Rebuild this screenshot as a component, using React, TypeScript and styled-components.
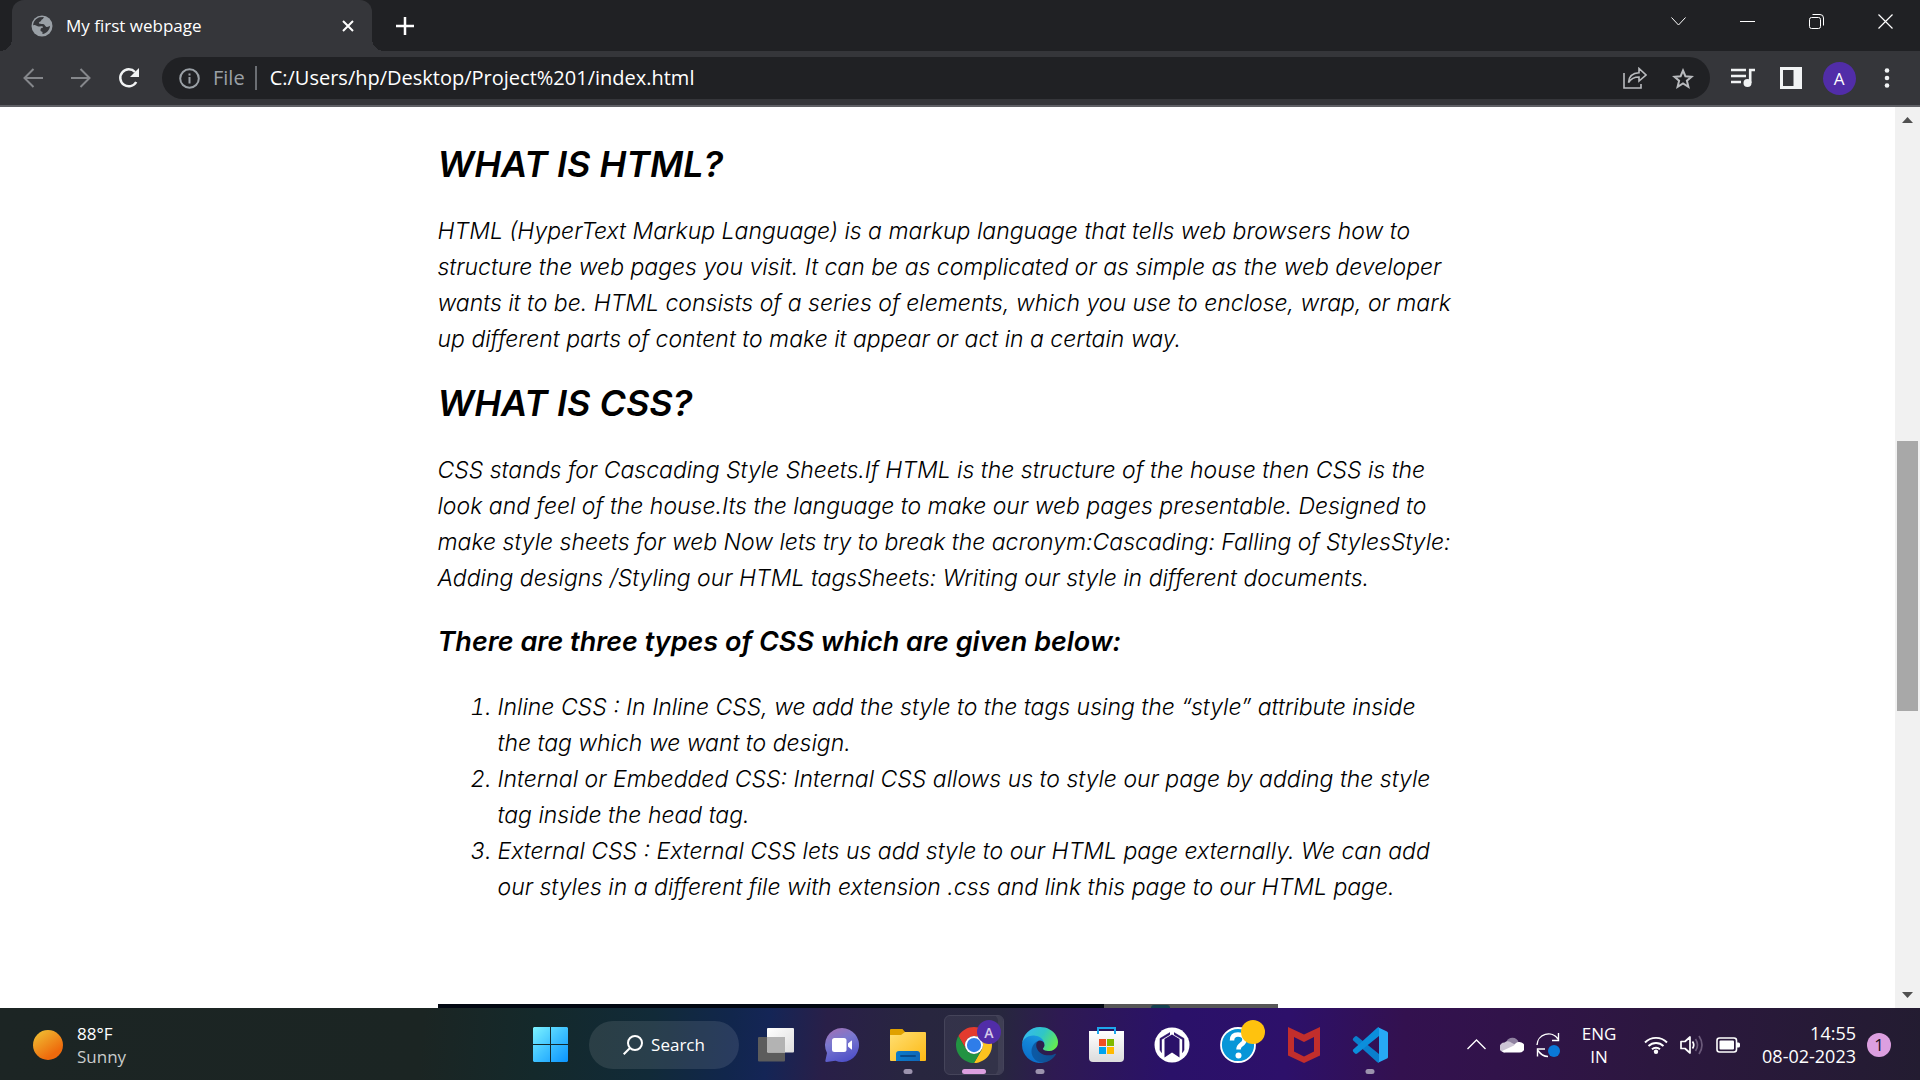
import React from 'react';
import styled, { createGlobalStyle } from 'styled-components';

const GlobalStyle = createGlobalStyle`
  *, *::before, *::after { box-sizing: border-box; }
  body { margin: 0; background: #fff; }
  button { border: 0; padding: 0; margin: 0; background: none; color: inherit; font: inherit; cursor: pointer; }
  svg { display: block; flex: none; }
`;

const UI_FONT = `"Open Sans", "Noto Sans", sans-serif`;

const Desktop = styled.div`
  display: flex;
  flex-direction: column;
  height: 100vh;
  overflow: hidden;
  font-family: ${UI_FONT};
`;

/* ---------- browser frame ---------- */

const TabStrip = styled.header`
  display: flex;
  flex: none;
  height: 51px;
  padding-left: 12px;
  background: #202124;
  color: #fff;
`;

const Tab = styled.div`
  position: relative;
  display: flex;
  align-items: center;
  width: 360px;
  padding: 0 12px 0 19px;
  border-radius: 12px 12px 0 0;
  background: #35363a;

  &::before, &::after {
    content: "";
    position: absolute;
    bottom: 0;
    width: 12px;
    height: 12px;
  }
  &::before { left: -12px; background: radial-gradient(circle at 0 0, transparent 12px, #35363a 12px); }
  &::after { right: -12px; background: radial-gradient(circle at 100% 0, transparent 12px, #35363a 12px); }
`;

const TabTitle = styled.span`
  flex: 1;
  margin-left: 13px;
  font-size: 17px;
  line-height: 24px;
`;

const StripButton = styled.button`
  display: grid;
  place-items: center;
  width: 24px;
  height: 24px;
`;

const NewTab = styled(StripButton)`
  width: 42px;
  height: 51px;
  margin-left: 12px;
`;

const WindowControls = styled.div`
  display: flex;
  margin-left: auto;
`;

const WindowButton = styled.button`
  display: grid;
  place-items: center;
  width: 69px;
  height: 42px;
`;

const Toolbar = styled.nav`
  display: flex;
  flex: none;
  align-items: center;
  height: 56px;
  padding: 0 9px;
  border-bottom: 2px solid #5f6065;
  background: #35363a;
`;

const ToolButton = styled.button<{ $tone?: string }>`
  display: grid;
  flex: none;
  place-items: center;
  width: 48px;
  height: 42px;
  color: ${(p) => p.$tone ?? '#f1f3f4'};
`;

const Omnibox = styled.div`
  display: flex;
  flex: 1;
  align-items: center;
  height: 42px;
  margin: 0 9px;
  padding: 0 3px;
  border-radius: 21px;
  background: #202124;
`;

const Scheme = styled.label`
  padding-right: 10px;
  border-right: 2px solid #6b6e73;
  color: #9aa0a6;
  font-size: 20px;
  line-height: 24px;
`;

const Address = styled.input`
  flex: 1;
  min-width: 0;
  padding: 0 0 0 13px;
  border: 0;
  outline: 0;
  background: transparent;
  color: #fff;
  font-family: ${UI_FONT};
  font-size: 20px;
  line-height: 30px;
`;

const Avatar = styled.span`
  display: grid;
  place-items: center;
  width: 33px;
  height: 33px;
  border-radius: 50%;
  background: #512da8;
  color: #fff;
  font-size: 17px;
`;

/* ---------- page ---------- */

const Viewport = styled.div`
  display: flex;
  flex: 1;
  min-height: 0;
`;

const Page = styled.main`
  flex: 1;
  min-width: 0;
  overflow: hidden;
  padding-top: 33px;
  background: #fff;
  color: #000;
`;

const Article = styled.article`
  max-width: 1020px;
  margin: 0 auto;
  font-family: Inter, "Open Sans", sans-serif;
  font-size: 23px;
  font-style: italic;
  font-weight: 300;
  line-height: 36px;
  white-space: nowrap;
`;

const Heading = styled.h2`
  margin: 22px 0 25px;
  font-size: 36px;
  font-weight: 600;
  line-height: 48px;

  &:first-child { margin-top: 0; }
`;

const SubHeading = styled.h3`
  margin: 28px 0 29px;
  font-size: 27px;
  font-weight: 600;
  line-height: 36px;
`;

const Paragraph = styled.p`
  margin: 0;
`;

const TypeList = styled.ol`
  margin: 0 0 99px;
  padding-left: 60px;
`;

const Screenshot = styled.div`
  display: flex;
  max-width: 840px;
  height: 120px;
  background: #020812;
`;

const ScreenshotSide = styled.div`
  display: flex;
  width: 174px;
  margin-left: auto;
  padding-left: 47px;
  background: #575757;
`;

const ScreenshotMark = styled.div`
  width: 19px;
  height: 24px;
  margin-top: 1px;
  border-radius: 3px 3px 0 0;
  background: #14404e;
`;

const Scrollbar = styled.div`
  display: flex;
  flex: none;
  flex-direction: column;
  width: 25px;
  background: #f1f1f1;
`;

const ScrollArrow = styled.button`
  display: grid;
  place-items: center;
  height: 26px;
`;

const Track = styled.div`
  display: flex;
  flex: 1;
  flex-direction: column;
  padding: 0 2px;

  &::before { content: ""; flex: 308; }
  &::after { content: ""; flex: 271; }
`;

const Thumb = styled.div`
  flex: 270;
  background: #a8a8a8;
`;

/* ---------- taskbar ---------- */

const Taskbar = styled.footer`
  display: grid;
  flex: none;
  grid-template-columns: 1fr auto 1fr;
  height: 72px;
  padding-top: 1px;
  color: #fff;
  font-size: 17px;
  line-height: 23px;
  background: linear-gradient(95deg,
    #1c2524 0%, #1b2523 22%, #14292b 28%, #112a38 34%, #11264c 38%,
    #142556 40%, #291f48 43%, #28263f 48%, #27273e 52%, #2e1a52 55%,
    #2a1169 61%, #2d106a 67%, #33114f 73%, #31134a 78%, #2c173f 86%, #231c31 100%);
`;

const Weather = styled.button`
  display: flex;
  align-items: center;
  justify-self: start;
  gap: 14px;
  padding-left: 33px;
  text-align: left;
`;

const Sun = styled.span`
  width: 30px;
  height: 30px;
  border-radius: 50%;
  background: linear-gradient(145deg, #f0b42e 15%, #ee6a0c 75%);
`;

const Stack = styled.span`
  display: flex;
  flex-direction: column;
`;

const Muted = styled.span`
  color: #c9cccb;
`;

const Apps = styled.div`
  display: flex;
  align-items: center;
`;

const AppButton = styled.button<{ $mark?: 'dot' | 'bar' }>`
  position: relative;
  display: grid;
  place-items: center;
  width: 66px;
  height: 71px;

  &::after {
    content: "";
    display: ${(p) => (p.$mark ? 'block' : 'none')};
    position: absolute;
    bottom: 6px;
    left: 50%;
    width: ${(p) => (p.$mark === 'bar' ? '24px' : '9px')};
    height: 5px;
    border-radius: 3px;
    background: ${(p) => (p.$mark === 'bar' ? '#dc9fe0' : '#9c93ae')};
    transform: translateX(-50%);
  }
`;

const ActiveTile = styled.span`
  display: grid;
  place-items: center;
  width: 60px;
  height: 60px;
  border: 1px solid #45445a;
  border-radius: 6px;
  background: rgba(255, 255, 255, 0.06);
  box-shadow: inset -6px 0 0 -1px rgba(255, 255, 255, 0.06);
`;

const Search = styled.button`
  display: flex;
  align-items: center;
  justify-content: center;
  gap: 8px;
  width: 150px;
  height: 48px;
  margin: 0 4px 0 6px;
  border-radius: 24px;
  background: rgba(255, 255, 255, 0.1);
`;

const AppBadge = styled.span<{ $color: string }>`
  position: absolute;
  top: 11px;
  right: 6px;
  display: grid;
  place-items: center;
  width: 24px;
  height: 24px;
  border-radius: 50%;
  background: ${(p) => p.$color};
  color: #d5cbea;
  font-size: 14px;
  font-weight: 600;
`;

const Tray = styled.div`
  display: flex;
  align-items: center;
  justify-self: end;
  padding-right: 29px;
`;

const TrayButton = styled.button`
  display: grid;
  place-items: center;
  width: 36px;
  height: 48px;
`;

const Language = styled.button`
  width: 66px;
  margin-right: 6px;
`;

const Clock = styled.button`
  margin: 0 11px 0 16px;
  font-size: 18px;
  text-align: right;
`;

const Notice = styled.button`
  width: 24px;
  height: 24px;
  border-radius: 50%;
  background: #dc9fe0;
  color: #1c1220;
  font-size: 17px;
`;

/* ---------- icons ---------- */

const line = { fill: 'none', stroke: 'currentColor' } as const;

const GlobeIcon = () => (
  <svg width="22" height="22" viewBox="0 0 22 22">
    <circle cx="11" cy="11" r="10.5" fill="#9aa0a6" />
    <path d="M8.5 2.2 13 2c-1 1-.5 2-2 2.4-.9.3-.5 1.500-1.600 2-1 .4-1.700.8-1.500 1.700.4 1.200 2.400.7 4.200.9 1.900.2 1.700 2 3 2.700 1.200.5 2.900-.1 4-.9-.4 4.300-3.500 7.600-7.500 8.300-.6-.6.400-1.600-.4-2.300-.9-.8-1.900-.5-1.700-1.900.2-1.600.3-1.600 2.100-2.100.8-.3.400-1.200-.6-1.500-2.200-.6-2.100.8-4.200-.1C5 10.600 4.200 9.200 2.100 10.400 2.300 6.200 5 3.400 8.500 2.200Z" fill="#35363a" />
  </svg>
);

const FolderIcon = () => (
  <svg width="36" height="34" viewBox="0 0 36 34">
    <defs>
      <linearGradient id="folder" x1="0" y1="0" x2="1" y2="1"><stop offset="0" stopColor="#ffdf73" /><stop offset="1" stopColor="#fdb913" /></linearGradient>
      <linearGradient id="folderTab" x1="0" y1="0" x2="1" y2="0"><stop offset="0" stopColor="#0a7bcb" /><stop offset="1" stopColor="#1167b8" /></linearGradient>
    </defs>
    <path d="M0 2Q0 1 1 1h11.500L15 4v10H0Z" fill="#e0a100" />
    <path d="M0 7h11l4-3h20q1 0 1 1v27q0 1-1 1H1q-1 0-1-1Z" fill="url(#folder)" />
    <path d="M6 33v-7q0-3 3-3h18q3 0 3 3v7Z" fill="url(#folderTab)" />
    <path d="M11 28h14" stroke="#084a8a" strokeWidth="2" strokeLinecap="round" />
  </svg>
);

const ChromeIcon = () => (
  <svg width="36" height="36" viewBox="0 0 48 48">
    <path d="M24 12H44.780A24 24 0 0 0 3.220 12L13.610 30A12 12 0 0 1 24 12Z" fill="#e33b2e" />
    <path d="M34.390 30 24 48A24 24 0 0 0 44.780 12H24A12 12 0 0 1 34.390 30Z" fill="#fcc31e" />
    <path d="M13.610 30 3.220 12A24 24 0 0 0 24 48L34.390 30A12 12 0 0 1 13.610 30Z" fill="#229342" />
    <circle cx="24" cy="24" r="12" fill="#fff" />
    <circle cx="24" cy="24" r="9.500" fill="#2f7de9" />
  </svg>
);

const EdgeIcon = () => (
  <svg width="36" height="36" viewBox="0 0 256 256">
    <defs>
      <linearGradient id="e1" x1="0.200" y1="0.600" x2="1" y2="0.600"><stop offset="0" stopColor="#0c59a4" /><stop offset="1" stopColor="#114a8b" /></linearGradient>
      <linearGradient id="e2" x1="0.700" y1="0" x2="0.300" y2="1"><stop offset="0" stopColor="#1b9de2" /><stop offset="0.400" stopColor="#1384d7" /><stop offset="1" stopColor="#0a6cc9" /></linearGradient>
      <linearGradient id="e3" x1="0" y1="0.300" x2="1" y2="0.700"><stop offset="0" stopColor="#35b9f0" /><stop offset="0.500" stopColor="#30c6c6" /><stop offset="1" stopColor="#66eb4c" /></linearGradient>
    </defs>
    <path fill="url(#e1)" d="M235.680 190.460a93.730 93.730 0 0 1-10.540 4.710 101.870 101.870 0 0 1-35.900 6.460c-47.320 0-88.540-32.550-88.540-74.320A31.480 31.480 0 0 1 117.130 99.900c-42.800 1.800-53.800 46.400-53.800 72.530 0 73.880 68.090 81.370 82.760 81.370 7.910 0 19.840-2.300 27-4.560l1.310-.44a128.340 128.340 0 0 0 66.600-52.800 4 4 0 0 0-5.320-5.540z" />
    <path fill="url(#e2)" d="M105.730 241.420a79.200 79.200 0 0 1-22.740-21.340 80.720 80.720 0 0 1 29.530-120.200c3.120-1.470 8.450-4.130 15.540-4a32.350 32.350 0 0 1 25.690 13 31.880 31.880 0 0 1 6.360 18.660c0-.21 24.460-79.600-80-79.600-43.900 0-80 41.660-80 78.210a130.150 130.150 0 0 0 12.110 56 128 128 0 0 0 156.380 67.110 75.550 75.550 0 0 1-62.780-8z" />
    <path fill="url(#e3)" d="M152.330 148.860c-.81 1.050-3.300 2.500-3.300 5.660 0 2.610 1.700 5.120 4.720 7.230 14.380 10 41.490 8.680 41.560 8.680a59.560 59.560 0 0 0 30.270-8.350A61.380 61.380 0 0 0 256 109.200c.26-22.410-8-37.310-11.340-43.910C223.460 23.840 177.720 0 128 0A128 128 0 0 0 0 126.200c.48-36.540 36.800-66.050 80-66.050 3.500 0 23.460.34 42 10.070 16.340 8.580 24.900 18.940 30.850 29.210 6.180 10.670 7.280 24.150 7.280 29.520 0 5.370-2.740 13.330-7.800 19.910z" />
  </svg>
);

const CodeIcon = () => (
  <svg width="36" height="36" viewBox="0 0 36 36">
    <path d="M1 11.500 3 9.500q1-.8 2.200 0L27 27v8.600Q26 36 25 35L1.200 13.400q-.9-1 0-1.900Z" fill="#0a7fcd" />
    <path d="M1 24.500 3 26.500q1 .8 2.200 0L27 9V.4Q26 0 25 1L1.200 22.600q-.9 1 0 1.900Z" fill="#0b8fdc" />
    <path d="M26 .2 35 4.500q1 .5 1 1.500v24q0 1-1 1.500l-9 4.300q1-.6 1-2V2.200q0-1.400-1-2Z" fill="#27a9f5" />
  </svg>
);

/* ---------- composition ---------- */

const LISTED = [
  ['Inline CSS : In Inline CSS, we add the style to the tags using the “style” attribute inside', 'the tag which we want to design.'],
  ['Internal or Embedded CSS: Internal CSS allows us to style our page by adding the style', 'tag inside the head tag.'],
  ['External CSS : External CSS lets us add style to our HTML page externally. We can add', 'our styles in a different file with extension .css and link this page to our HTML page.'],
];

const Browser = () => (
  <>
    <TabStrip>
      <Tab>
        <GlobeIcon />
        <TabTitle>My first webpage</TabTitle>
        <StripButton aria-label="Close tab">
          <svg width="12" height="12" viewBox="0 0 12 12" {...line} strokeWidth="2"><path d="m1 1 10 10M11 1 1 11" /></svg>
        </StripButton>
      </Tab>
      <NewTab aria-label="New tab">
        <svg width="18" height="18" viewBox="0 0 18 18" {...line} strokeWidth="2.500"><path d="M9 0v18M0 9h18" /></svg>
      </NewTab>
      <WindowControls>
        <WindowButton aria-label="Search tabs">
          <svg width="15" height="9" viewBox="0 0 15 9" {...line}><path d="m.5.500 7 7.500 7-7.500" /></svg>
        </WindowButton>
        <WindowButton aria-label="Minimize">
          <svg width="15" height="15" viewBox="0 0 15 15" {...line}><path d="M0 7.500h15" /></svg>
        </WindowButton>
        <WindowButton aria-label="Restore">
          <svg width="15" height="15" viewBox="0 0 15 15" {...line}><rect x=".5" y="3.500" width="11" height="11" rx="2" /><path d="M3.500.5h7.500a3.500 3.500 0 0 1 3.500 3.500v7.500" /></svg>
        </WindowButton>
        <WindowButton aria-label="Close">
          <svg width="15" height="15" viewBox="0 0 15 15" {...line} strokeWidth="1.200"><path d="m.5.500 14 14m0-14-14 14" /></svg>
        </WindowButton>
      </WindowControls>
    </TabStrip>
    <Toolbar aria-label="Browser toolbar">
      <ToolButton $tone="#85878b" aria-label="Back">
        <svg width="20" height="20" viewBox="0 0 20 20" {...line} strokeWidth="2"><path d="M20 10H2M10.500 1 1.500 10l9 9" /></svg>
      </ToolButton>
      <ToolButton $tone="#85878b" aria-label="Forward">
        <svg width="20" height="20" viewBox="0 0 20 20" {...line} strokeWidth="2"><path d="M0 10h18M9.500 1l9 9-9 9" /></svg>
      </ToolButton>
      <ToolButton aria-label="Reload">
        <svg width="22" height="22" viewBox="0 0 22 22"><path d="M18.200 15A8.500 8.500 0 1 1 17 5" fill="none" stroke="currentColor" strokeWidth="2.500" /><path d="M21 1v9h-9Z" fill="currentColor" /></svg>
      </ToolButton>
      <Omnibox>
        <ToolButton $tone="#9aa0a6" aria-label="View site information">
          <svg width="21" height="21" viewBox="0 0 21 21" {...line} strokeWidth="2"><circle cx="10.500" cy="10.500" r="9.300" /><path d="M10.500 9v6.500M10.500 5.500v2" /></svg>
        </ToolButton>
        <Scheme htmlFor="address">File</Scheme>
        <Address id="address" defaultValue="C:/Users/hp/Desktop/Project%201/index.html" />
        <ToolButton $tone="#b9bbbe" aria-label="Share this page">
          <svg width="24" height="22" viewBox="0 0 24 22" {...line} strokeWidth="1.600"><path d="M1 6v15h17v-4" /><path d="M5.500 15.500C6 9 10 6 16 5.800V1.500L23 8l-7 6v-4c-5 0-8 1.500-10.500 5.500Z" /></svg>
        </ToolButton>
        <ToolButton $tone="#b9bbbe" aria-label="Bookmark this tab">
          <svg width="22" height="21" viewBox="0 0 22 21" {...line} strokeWidth="2"><path d="m11 2.500 2.400 5.700 6.200.5-4.700 4 1.500 6.100-5.400-3.300-5.400 3.300 1.500-6.100-4.700-4 6.200-.5Z" /></svg>
        </ToolButton>
      </Omnibox>
      <ToolButton aria-label="Media controls">
        <svg width="24" height="20" viewBox="0 0 24 20"><path d="M0 2h15M0 8h15M0 14h10" fill="none" stroke="currentColor" strokeWidth="2.500" /><circle cx="16.500" cy="15" r="4" fill="currentColor" /><path d="M19.200 15V2H24" fill="none" stroke="currentColor" strokeWidth="2.600" /></svg>
      </ToolButton>
      <ToolButton aria-label="Side panel">
        <svg width="22" height="22" viewBox="0 0 22 22"><rect width="22" height="22" fill="currentColor" /><rect x="3" y="3" width="10.500" height="16" fill="#35363a" /></svg>
      </ToolButton>
      <ToolButton aria-label="Profile"><Avatar>A</Avatar></ToolButton>
      <ToolButton aria-label="Menu">
        <svg width="6" height="22" viewBox="0 0 6 22" fill="currentColor"><circle cx="3" cy="3.500" r="2.300" /><circle cx="3" cy="11" r="2.300" /><circle cx="3" cy="18.500" r="2.300" /></svg>
      </ToolButton>
    </Toolbar>
  </>
);

const Content = () => (
  <Viewport>
    <Page>
      <Article>
        <Heading>WHAT IS HTML?</Heading>
        <Paragraph>
          HTML (HyperText Markup Language) is a markup language that tells web browsers how to<br />
          structure the web pages you visit. It can be as complicated or as simple as the web developer<br />
          wants it to be. HTML consists of a series of elements, which you use to enclose, wrap, or mark<br />
          up different parts of content to make it appear or act in a certain way.
        </Paragraph>
        <Heading>WHAT IS CSS?</Heading>
        <Paragraph>
          CSS stands for Cascading Style Sheets.If HTML is the structure of the house then CSS is the<br />
          look and feel of the house.Its the language to make our web pages presentable. Designed to<br />
          make style sheets for web Now lets try to break the acronym:Cascading: Falling of StylesStyle:<br />
          Adding designs /Styling our HTML tagsSheets: Writing our style in different documents.
        </Paragraph>
        <SubHeading>There are three types of CSS which are given below:</SubHeading>
        <TypeList>
          {LISTED.map(([first, second]) => (
            <li key={first}>{first}<br />{second}</li>
          ))}
        </TypeList>
        <Screenshot>
          <ScreenshotSide><ScreenshotMark /></ScreenshotSide>
        </Screenshot>
      </Article>
    </Page>
    <Scrollbar>
      <ScrollArrow aria-label="Scroll up">
        <svg width="11" height="6" viewBox="0 0 11 6"><path d="M0 6 5.500 0 11 6Z" fill="#505050" /></svg>
      </ScrollArrow>
      <Track><Thumb /></Track>
      <ScrollArrow aria-label="Scroll down">
        <svg width="11" height="6" viewBox="0 0 11 6"><path d="M0 0h11L5.500 6Z" fill="#505050" /></svg>
      </ScrollArrow>
    </Scrollbar>
  </Viewport>
);

const SystemBar = () => (
  <Taskbar>
    <Weather>
      <Sun />
      <Stack><span>88°F</span><Muted>Sunny</Muted></Stack>
    </Weather>
    <Apps>
      <AppButton aria-label="Start">
        <svg width="35" height="35" viewBox="0 0 35 35">
          <defs><linearGradient id="win" gradientUnits="userSpaceOnUse" x1="0" y1="0" x2="35" y2="35"><stop offset="0" stopColor="#7df3ff" /><stop offset="0.500" stopColor="#3fc2ff" /><stop offset="1" stopColor="#0a94ff" /></linearGradient></defs>
          <path d="M1 0h16v17H0V1ZM18 0h16l1 1v16H18ZM0 18h17v17H1l-1-1ZM18 18h17v16l-1 1H18Z" fill="url(#win)" />
        </svg>
      </AppButton>
      <Search>
        <svg width="20" height="20" viewBox="0 0 20 20" {...line} strokeWidth="2"><circle cx="12" cy="8" r="7" /><path d="m7 13-6.300 6.300" /></svg>
        Search
      </Search>
      <AppButton aria-label="Task view">
        <svg width="36" height="34" viewBox="0 0 36 34">
          <defs><linearGradient id="tv" x1="0" y1="0" x2="1" y2="1"><stop offset="0" stopColor="#fff" /><stop offset="1" stopColor="#dedede" /></linearGradient></defs>
          <rect x="0" y="9" width="27" height="24.500" rx="1" fill="#5c5c5c" />
          <rect x="9" y="0" width="27" height="24.500" rx="1" fill="url(#tv)" />
          <path d="M9 9h18v15.500H10l-1-1Z" fill="#b3b3b3" />
        </svg>
      </AppButton>
      <AppButton aria-label="Chat">
        <svg width="34" height="34" viewBox="0 0 34 34">
          <defs><linearGradient id="chat" x1="0.200" y1="0" x2="0.600" y2="1"><stop offset="0" stopColor="#a071b5" /><stop offset="0.400" stopColor="#7a78cf" /><stop offset="1" stopColor="#4f50c8" /></linearGradient></defs>
          <path d="M17 0a17 17 0 1 1-6.500 32.700L1.500 34q-1.500 0-1.100-1.500L2 25A17 17 0 0 1 17 0Z" fill="url(#chat)" />
          <rect x="7" y="10" width="14.500" height="14" rx="2.500" fill="#fff" />
          <path d="m23 15.500 3.500-3q.5-.3.500.3v8.400q0 .6-.5.300l-3.500-3Z" fill="#fff" />
        </svg>
      </AppButton>
      <AppButton $mark="dot" aria-label="File Explorer"><FolderIcon /></AppButton>
      <AppButton $mark="bar" aria-label="Google Chrome">
        <ActiveTile><ChromeIcon /></ActiveTile>
        <AppBadge $color="#512da8">A</AppBadge>
      </AppButton>
      <AppButton $mark="dot" aria-label="Microsoft Edge"><EdgeIcon /></AppButton>
      <AppButton aria-label="Microsoft Store">
        <svg width="35" height="35" viewBox="0 0 35 35">
          <defs><linearGradient id="store" x1="0" y1="0" x2="0" y2="1"><stop offset="0" stopColor="#fff" /><stop offset="1" stopColor="#dcdcdc" /></linearGradient></defs>
          <path d="M0 4h35v27q0 4-4 4H4q-4 0-4-4Z" fill="url(#store)" />
          <path d="M9 7V1h17v6" fill="none" stroke="#1ea7ec" strokeWidth="2" />
          <path d="M10 12h7v7h-7Z" fill="#f04e23" /><path d="M18 12h7v7h-7Z" fill="#7fb900" />
          <path d="M10 20h7v7h-7Z" fill="#00a3ee" /><path d="M18 20h7v7h-7Z" fill="#ffb900" />
        </svg>
      </AppButton>
      <AppButton aria-label="Assistant">
        <svg width="36" height="36" viewBox="0 0 36 36">
          <circle cx="18" cy="18" r="17.500" fill="#fff" />
          <path d="M10.500 30.500V12L18 7.500 25.500 12v18.500L18 25.500Z" fill="#2b1169" />
          <path d="M16 5.500 6 11.500V23l1.500 2.500V12.500L16 7.500M20 5.500 30 11.500V23l-1.500 2.500V12.500L20 7.500" fill="#2b1169" stroke="#2b1169" strokeWidth=".6" />
        </svg>
      </AppButton>
      <AppButton aria-label="Help">
        <svg width="36" height="36" viewBox="0 0 36 36">
          <circle cx="18" cy="18" r="17" fill="#0796d8" stroke="#fff" strokeWidth="1.800" />
          <path d="M12 13.500q0-6 6-6 6.500 0 6.500 5 0 3-3.200 5Q18.500 19.500 18.500 22.500" fill="none" stroke="#fff" strokeWidth="4.500" />
          <circle cx="18.500" cy="28.500" r="3" fill="#fff" />
        </svg>
        <AppBadge $color="#ffc20e" />
      </AppButton>
      <AppButton aria-label="McAfee">
        <svg width="32" height="36" viewBox="0 0 32 36"><path d="M0 0 16 7.500 32 0v28.500L16 36 0 28.500ZM6 10v14.500l10 5 10-5V10l-10 5Z" fill="#c22e2c" fillRule="evenodd" /></svg>
      </AppButton>
      <AppButton $mark="dot" aria-label="Visual Studio Code"><CodeIcon /></AppButton>
    </Apps>
    <Tray>
      <TrayButton aria-label="Show hidden icons">
        <svg width="19" height="11" viewBox="0 0 19 11" {...line} strokeWidth="1.400"><path d="m.5 10 9-9 9 9" /></svg>
      </TrayButton>
      <TrayButton aria-label="OneDrive">
        <svg width="24" height="16" viewBox="0 0 24 16">
          <path d="M6.500 4.500A6.500 6.500 0 0 1 18.500 5l-2 5H8Z" fill="#8f82a0" />
          <path d="M4.500 15.500A5 5 0 0 1 4.500 5.500Q8 3 12 6l6 3L4.500 15.500Z" fill="#cdc6d5" />
          <path d="M2 14 14 8.500q2-4 5.500-3.500A5 5 0 0 1 19.500 15.500H5q-2 0-3-1.500Z" fill="#fff" />
        </svg>
      </TrayButton>
      <TrayButton aria-label="Updates">
        <svg width="24" height="26" viewBox="0 0 24 26"><path d="M1 13A11.500 11.500 0 0 1 22 7M22.500 1v7.500H16M12 24.500Q6 24.500 2 18.500M1.500 24.500V17H9" fill="none" stroke="#fff" strokeWidth="1.400" /><circle cx="18" cy="19" r="6" fill="#0a78d7" /></svg>
      </TrayButton>
      <Language aria-label="Input language"><Stack><span>ENG</span><span>IN</span></Stack></Language>
      <TrayButton aria-label="Wi-Fi">
        <svg width="24" height="18" viewBox="0 0 24 18"><path d="M1 6.500a15.500 15.500 0 0 1 22 0M4.500 10a10.700 10.700 0 0 1 15 0M8 13.300a5.800 5.800 0 0 1 8 0" fill="none" stroke="#fff" strokeWidth="1.900" /><circle cx="12" cy="15.700" r="2.200" fill="#fff" /></svg>
      </TrayButton>
      <TrayButton aria-label="Volume">
        <svg width="24" height="20" viewBox="0 0 24 20" fill="none" stroke="#fff" strokeWidth="1.700"><path d="M1 6.500h4L10 2v16l-5-4.500H1Z" strokeLinejoin="round" /><path d="M12.500 6.500q2.500 3.500 0 7" /><path d="M15.500 4q4 6 0 12M19 1q6 9 0 18" stroke="#6b5a7a" /></svg>
      </TrayButton>
      <TrayButton aria-label="Battery">
        <svg width="24" height="16" viewBox="0 0 24 16"><rect x="1" y="1" width="19.500" height="14" rx="2.500" fill="none" stroke="#fff" strokeWidth="1.600" /><rect x="3.500" y="3.500" width="14.500" height="9" rx="1" fill="#fff" /><path d="M21 5.500h1.500q1.500 0 1.500 1.500v2q0 1.500-1.500 1.500H21Z" fill="#fff" /></svg>
      </TrayButton>
      <Clock aria-label="Date and time"><Stack><span>14:55</span><span>08-02-2023</span></Stack></Clock>
      <Notice aria-label="Notifications">1</Notice>
    </Tray>
  </Taskbar>
);

export default function App() {
  return (
    <Desktop>
      <GlobalStyle />
      <Browser />
      <Content />
      <SystemBar />
    </Desktop>
  );
}
